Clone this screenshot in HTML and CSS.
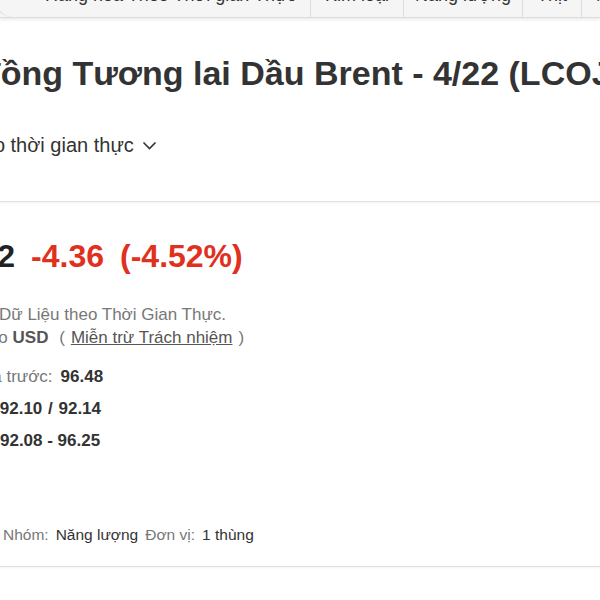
FILE: index.html
```html
<!DOCTYPE html>
<html lang="vi">
<head>
    <meta charset="UTF-8">
    <meta name="viewport" content="width=device-width, initial-scale=1.0">
    <title>Hợp đồng Tương lai Dầu Brent</title>
    <link rel="stylesheet" href="styles.css">
</head>
<body>
    <!-- thanh tab hàng hóa -->
    <nav class="tabs">
        <a class="tab first">Hàng hóa Theo Thời gian Thực</a>
        <a class="tab">Kim loại</a>
        <a class="tab energy">Năng lượng</a>
        <a class="tab">Thịt</a>
        <a class="tab">Ngũ cốc</a>
    </nav>

    <div class="instrument">
        <h1 class="title">Hợp đồng Tương lai Dầu Brent - 4/22 (LCOJ2)</h1>
        <div class="exchange">Dữ liệu theo thời gian thực
            <svg class="chevron" width="15" height="9" viewBox="0 0 15 9"><path d="M1.5 1.5 L7.5 7.5 L13.5 1.5" fill="none" stroke="#333" stroke-width="1.6"/></svg>
        </div>
    </div>

    <hr class="divider">

    <div class="quote">
        <div class="price-row">
            <span class="last">92.12</span>
            <span class="change">-4.36</span>
            <span class="change">(-4.52%)</span>
        </div>
        <p class="note first-note">Dữ Liệu theo Thời Gian Thực.</p>
        <p class="note currency">Tính theo <b>USD</b> <span class="paren">(<a class="disclaimer">Miễn trừ Trách nhiệm</a>)</span></p>

        <div class="stats">
            <div class="stat prev"><span class="label">Đóng cửa trước:</span> <b>96.48</b></div>
            <div class="stat bid"><span class="label">Mua/Bán:</span> <b>92.10 / 92.14</b></div>
            <div class="stat range"><span class="label">Biên độ ngày:</span> <b>92.08 - 96.25</b></div>
        </div>

        <div class="meta">
            <span class="label">Nhóm:</span>
            <span>Năng lượng</span>
            <span class="label">Đơn vị:</span>
            <span>1 thùng</span>
        </div>
    </div>

    <hr class="divider bottom">
</body>
</html>
```

FILE: styles.css
```css
body {
    font-family: "Liberation Sans", Arial, sans-serif;
    margin: 0;
    padding: 0;
    background-color: #fff;
    color: #333;
    overflow: hidden;
}

.tabs {
    display: flex;
    height: 46px;
    margin-top: -29px;
    background-color: #f5f5f5;
    border-bottom: 1px solid #dcdcdc;
    box-shadow: 0 2px 3px rgba(0, 0, 0, 0.08);
    white-space: nowrap;
}

.tab {
    display: block;
    padding: 14px 14px 0;
    font-size: 18px;
    color: #333;
    border-right: 1px solid #ddd;
}

.tab.first {
    margin-left: -4px;
    padding-left: 48px;
    border-left: 1px solid #ccc;
    border-top-left-radius: 16px;
    border-bottom-left-radius: 16px;
}

.tab.energy {
    padding: 14px 11px 0;
}

.instrument {
    margin-left: -99px;
    padding-top: 35px;
    white-space: nowrap;
}

.title {
    margin: 0;
    font-size: 34px;
    line-height: 40px;
    font-weight: bold;
    color: #333;
}

.exchange {
    margin-top: 40px;
    margin-left: -5px;
    font-size: 20px;
    line-height: 24px;
    display: flex;
    align-items: center;
    gap: 8px;
}

.chevron {
    margin-top: 1px;
}

.divider {
    margin: 44px 0 0;
    border: none;
    border-top: 1px solid #e0e0e0;
    height: 2px;
    background: linear-gradient(#f4f4f4, #fff);
}

.divider.bottom {
    margin-top: 22px;
}

.quote {
    white-space: nowrap;
}

.price-row {
    margin-top: 32px;
    margin-left: -65px;
    display: flex;
    gap: 16px;
    font-size: 32px;
    line-height: 40px;
    font-weight: bold;
}

.last {
    color: #222;
}

.change {
    color: #e0301e;
}

.note {
    margin: 0;
    font-size: 17px;
    line-height: 23px;
    color: #777;
}

.first-note {
    margin-top: 27px;
    margin-left: -1px;
}

.currency {
    margin-left: -64px;
}

.note b {
    color: #555;
}

.paren {
    margin-left: 6px;
}

.disclaimer {
    margin: 0 6px;
    color: #555;
    text-decoration: underline;
}

.stats {
    margin-top: 12px;
}

.stat {
    display: flex;
    gap: 8px;
    font-size: 17px;
    line-height: 32px;
}

.stat.prev {
    margin-left: -73px;
}

.stat.bid {
    margin-left: -81px;
    word-spacing: 1px;
}

.stat.range {
    margin-left: -112px;
}

.stat .label {
    color: #777;
}

.stat b {
    color: #333;
}

.meta {
    display: flex;
    gap: 7px;
    margin-top: 69px;
    margin-left: 3px;
    font-size: 15.5px;
    color: #333;
}

.meta .label {
    color: #777;
}
```
